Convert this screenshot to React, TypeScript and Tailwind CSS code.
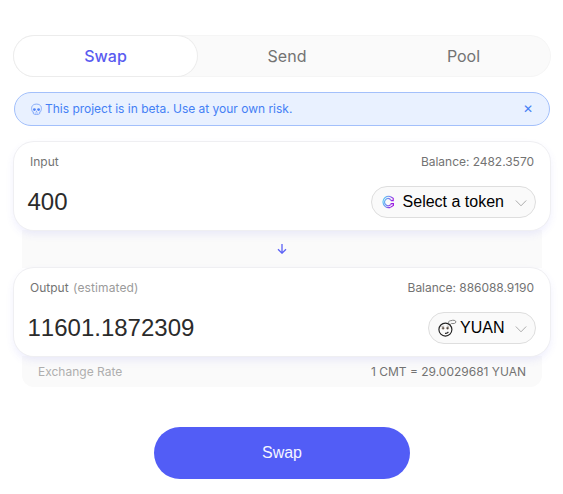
import React from 'react';

function Chevron() {
  return (
    <svg className="ml-[11px] mt-[3px] shrink-0" width="12" height="7" viewBox="0 0 12 7" fill="none" stroke="#a3a3a3" strokeWidth="0.9">
      <path d="M0.8 0.5 6 5.8 11.2 0.5" />
    </svg>
  );
}

function TokenLogo() {
  return (
    <svg className="mr-2 shrink-0" width="14" height="14" viewBox="0 0 14 14" fill="none">
      <defs>
        <linearGradient id="logo" x1="0" y1="4" x2="13" y2="8" gradientUnits="userSpaceOnUse">
          <stop offset="0" stopColor="#58e6f7" />
          <stop offset="0.5" stopColor="#6f8df0" />
          <stop offset="0.9" stopColor="#9a12e0" />
        </linearGradient>
      </defs>
      <g stroke="url(#logo)">
        <path d="M9.2 1.5A5.7 5.7 0 1 0 9.4 12.4" strokeWidth="1.2" />
        <path d="M9.2 4.3A3.5 3.5 0 1 0 9.6 9.6" strokeWidth="1.2" />
        <path d="M9.2 1.5 12.2 3.2V5.6H10.4L9.2 4.3M9.6 9.6 10.2 8.6H12.4V10.4L9.4 12.4" strokeWidth="1.1" />
      </g>
    </svg>
  );
}

function ThinkingFace() {
  return (
    <svg className="mr-[3px] shrink-0" width="19" height="18" viewBox="0 0 19 18" fill="none" stroke="#222">
      <circle cx="7.4" cy="10.6" r="6.5" strokeWidth="1.15" />
      <path d="M11.4 4.6C9.5 3.2 11.2 1.5 13 1.7 15 .8 17.8 1.2 17.9 2.9 17.8 4.5 15.3 4.9 13.6 4.4L12 5.8" stroke="#777" strokeWidth="0.9" />
      <path d="M3.4 7.6 6.2 7.2M8.8 7 11.2 7.4" strokeWidth="0.6" stroke="#888" />
      <circle cx="5.1" cy="9.2" r="1.1" fill="#234" stroke="#b99a80" strokeWidth="0.7" />
      <circle cx="9.6" cy="9.2" r="1.1" fill="#234" stroke="#b99a80" strokeWidth="0.7" />
      <path d="M7 14.3C8.4 14.5 9.7 14 10.4 12.9" strokeWidth="1.1" />
    </svg>
  );
}

function Skull() {
  return (
    <svg className="mr-[3px] shrink-0" width="11" height="12" viewBox="0 0 11 12" fill="none" stroke="#6f9cf9" strokeWidth="0.8">
      <path d="M2.3 8.9C1.2 8.8.8 8.2 1 7.3.1 5.4.4 1.1 5.5 1.1S10.9 5.4 10 7.3C10.2 8.2 9.8 8.8 8.7 8.9V10.6C8 11.8 3 11.8 2.3 10.6Z" />
      <ellipse cx="3.4" cy="6.6" rx="1.4" ry="1.3" fill="#4f83f7" stroke="none" />
      <ellipse cx="7.6" cy="6.6" rx="1.4" ry="1.3" fill="#4f83f7" stroke="none" />
      <path d="M5.5 7.5 4.8 8.7H6.2Z" fill="#4f83f7" stroke="none" />
      <path d="M3.8 10H7.2" strokeWidth="0.6" />
    </svg>
  );
}

type PanelProps = {
  label: string;
  note?: string;
  balance: string;
  amount: string;
  token: string;
  icon: React.ReactNode;
  pill: string;
};

function Panel({ label, note, balance, amount, token, icon, pill }: PanelProps) {
  return (
    <section className="relative z-10 h-[88px] rounded-[20px] bg-white shadow-[0_0_0_1px_#efeff2,0_4px_8px_0_rgba(80,80,240,0.1)]">
      <div className="flex items-center justify-between px-4 pt-3 text-xs leading-4 text-[#737373]">
        <span>
          {label}
          {note && <span className="ml-[4.5px] tracking-[0.01em] text-[#9b9b9b]">{note}</span>}
        </span>
        <span className="tracking-[-0.003em]">{balance}</span>
      </div>
      <div className="mt-4 flex h-8 items-center justify-between pl-[13.5px] pr-3.5 font-['Liberation_Sans',Arial,sans-serif]">
        <span className="text-2xl leading-8 text-[#2b2b2b] [font-kerning:none]">{amount}</span>
        <button className={`flex h-8 items-center whitespace-nowrap rounded-full border border-[#dedede] bg-[#fafafa] pr-2 text-base text-black ${pill}`}>
          {icon}
          <span>{token}</span>
          <Chevron />
        </button>
      </div>
    </section>
  );
}

export default function App() {
  return (
    <main className="h-[494px] w-[563px] bg-white pl-3.5 pt-9 font-['Inter',sans-serif]">
      <div className="w-[536px]">
        <nav className="flex h-10 rounded-full bg-[#fafafa] text-base text-[#737373] shadow-[0_0_0_1px_#f5f5f5]">
          <span className="flex w-[183px] items-center justify-center rounded-full bg-white font-medium text-[#5a5cf0] shadow-[0_0_0_1px_#ececec]">Swap</span>
          <span className="flex w-[180px] items-center justify-center">Send</span>
          <span className="flex flex-1 items-center justify-center">Pool</span>
        </nav>
        <div className="mt-4 flex h-[34px] items-center justify-between rounded-full border border-[#a3c0fb] bg-[#e9f1ff] pl-4 pr-4 text-xs text-[#4480f5]">
          <span className="flex items-center tracking-[-0.001em]"><Skull />This project is in beta. Use at your own risk.</span>
          <span className="font-medium">✕</span>
        </div>
        <div className="mt-4">
          <Panel label="Input" balance="Balance: 2482.3570" amount="400" token="Select a token" icon={<TokenLogo />} pill="w-[165px] pl-[8.6px]" />
          <div className="mx-2 flex h-[38px] items-center justify-center bg-[#fafafa]">
            <svg width="10" height="10" viewBox="0 0 10 10" fill="none" stroke="#5b61f6" strokeWidth="1.3">
              <path d="M5 0V9M1 5.3 5 9.2 9 5.3" />
            </svg>
          </div>
          <Panel label="Output" note="(estimated)" balance="Balance: 886088.9190" amount="11601.1872309" token="YUAN" icon={<ThinkingFace />} pill="w-[108px] pl-[9px]" />
          <div className="mx-2 flex h-[31px] items-center justify-between rounded-b-xl bg-[#fafafa] px-4 text-xs text-[#737373]">
            <span className="text-[#aeaeae]">Exchange Rate</span>
            <span>1 CMT = 29.0029681 YUAN</span>
          </div>
        </div>
        <div className="mt-10 flex justify-center">
          <button className="h-[52px] w-64 rounded-full bg-[#525df6] font-['Liberation_Sans',Arial,sans-serif] text-base text-[#f5f5ff]">Swap</button>
        </div>
      </div>
    </main>
  );
}
